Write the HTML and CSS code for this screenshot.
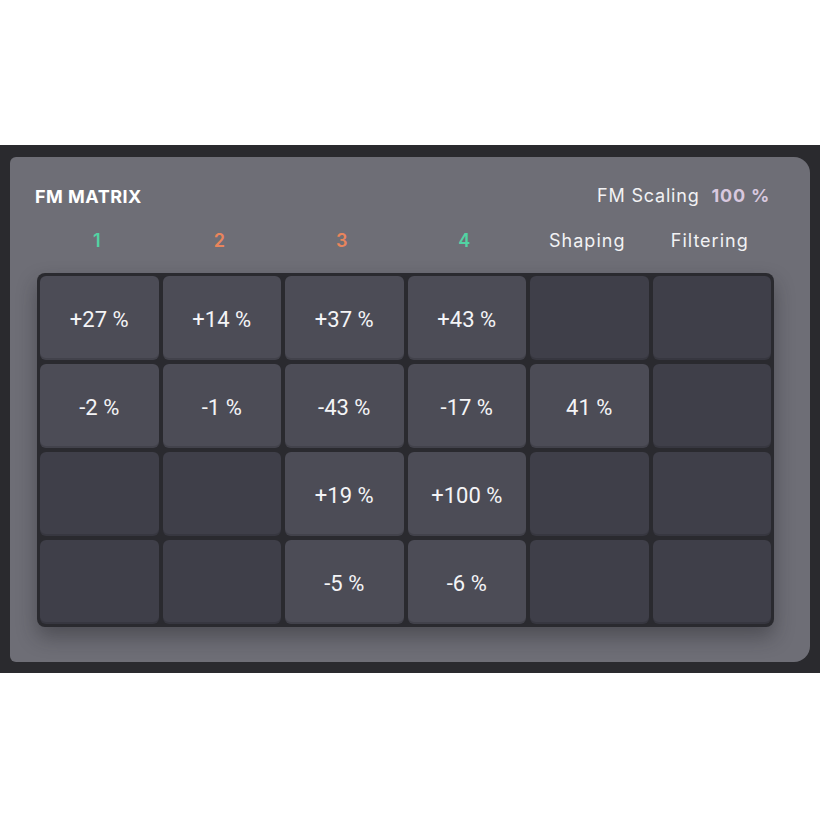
FILE: index.html
```html
<!DOCTYPE html>
<html lang="en">
<head>
    <meta charset="UTF-8">
    <meta name="viewport" content="width=device-width, initial-scale=1.0">
    <title>FM Matrix</title>
    <link rel="stylesheet" href="styles.css">
</head>
<body>
    <div class="rack">
        <div class="panel">
            <div class="panel-head">
                <h2>FM MATRIX</h2>
                <div class="scaling">FM Scaling <span class="scaling-value">100 %</span></div>
            </div>
            <div class="col-labels">
                <span class="op-green">1</span>
                <span class="op-orange">2</span>
                <span class="op-orange">3</span>
                <span class="op-green">4</span>
                <span>Shaping</span>
                <span>Filtering</span>
            </div>
            <div class="matrix">
                <div class="cell on">+27 %</div>
                <div class="cell on">+14 %</div>
                <div class="cell on">+37 %</div>
                <div class="cell on">+43 %</div>
                <div class="cell"></div>
                <div class="cell"></div>

                <div class="cell on">-2 %</div>
                <div class="cell on">-1 %</div>
                <div class="cell on">-43 %</div>
                <div class="cell on">-17 %</div>
                <div class="cell on">41 %</div>
                <div class="cell"></div>

                <div class="cell"></div>
                <div class="cell"></div>
                <div class="cell on">+19 %</div>
                <div class="cell on">+100 %</div>
                <div class="cell"></div>
                <div class="cell"></div>

                <div class="cell"></div>
                <div class="cell"></div>
                <div class="cell on">-5 %</div>
                <div class="cell on">-6 %</div>
                <div class="cell"></div>
                <div class="cell"></div>
            </div>
        </div>
    </div>
</body>
</html>
```

FILE: styles.css
```css
body {
    margin: 0;
    background: #ffffff;
    font-family: "Inter", "Noto Sans", sans-serif;
    color: #f2f2f4;
}
.rack {
    margin-top: 145px;
    height: 528px;
    box-sizing: border-box;
    padding: 12px 10px 11px 10px;
    background: #2a2a2e;
}
.panel {
    height: 505px;
    box-sizing: border-box;
    padding: 26px 36px 0 27px;
    background: #6e6e76;
    border-radius: 6px 16px 16px 6px;
}
.panel-head {
    display: flex;
    justify-content: space-between;
    align-items: center;
    height: 24px;
}
.panel-head h2 {
    margin: 2px 0 0 -2px;
    font-size: 18px;
    font-weight: 700;
    color: #ffffff;
    letter-spacing: 0.5px;
}
.scaling {
    font-size: 18px;
    margin-right: 4px;
    letter-spacing: 0.8px;
}
.scaling-value {
    margin-left: 6px;
    font-weight: 700;
    color: #d8c8df;
}
.col-labels {
    display: grid;
    grid-template-columns: repeat(6, 1fr);
    gap: 4px;
    padding: 0 3px;
    margin-top: 21px;
    height: 24px;
    align-items: center;
    text-align: center;
    font-size: 18px;
    letter-spacing: 1px;
}
.col-labels span {
    margin-right: 4px;
}
.op-green {
    color: #52d3a3;
    font-weight: 600;
}
.op-orange {
    color: #e9855c;
    font-weight: 600;
}
.matrix {
    display: grid;
    grid-template-columns: repeat(6, 1fr);
    grid-auto-rows: 84px;
    gap: 4px;
    width: 737px;
    box-sizing: border-box;
    margin-top: 21px;
    padding: 3px;
    background: #2a2a2f;
    border-radius: 8px;
    box-shadow: 0 10px 20px rgba(30, 30, 36, 0.4);
}
.cell {
    display: flex;
    align-items: center;
    justify-content: center;
    padding-top: 3px;
    background: #3f3f49;
    border-radius: 6px;
    box-shadow: inset 0 -2px 0 rgba(0, 0, 0, 0.12);
    font-family: "Roboto", "Liberation Sans", sans-serif;
    font-size: 22px;
    color: #f4f4f6;
}
.cell.on {
    background: #4c4c56;
}
```
